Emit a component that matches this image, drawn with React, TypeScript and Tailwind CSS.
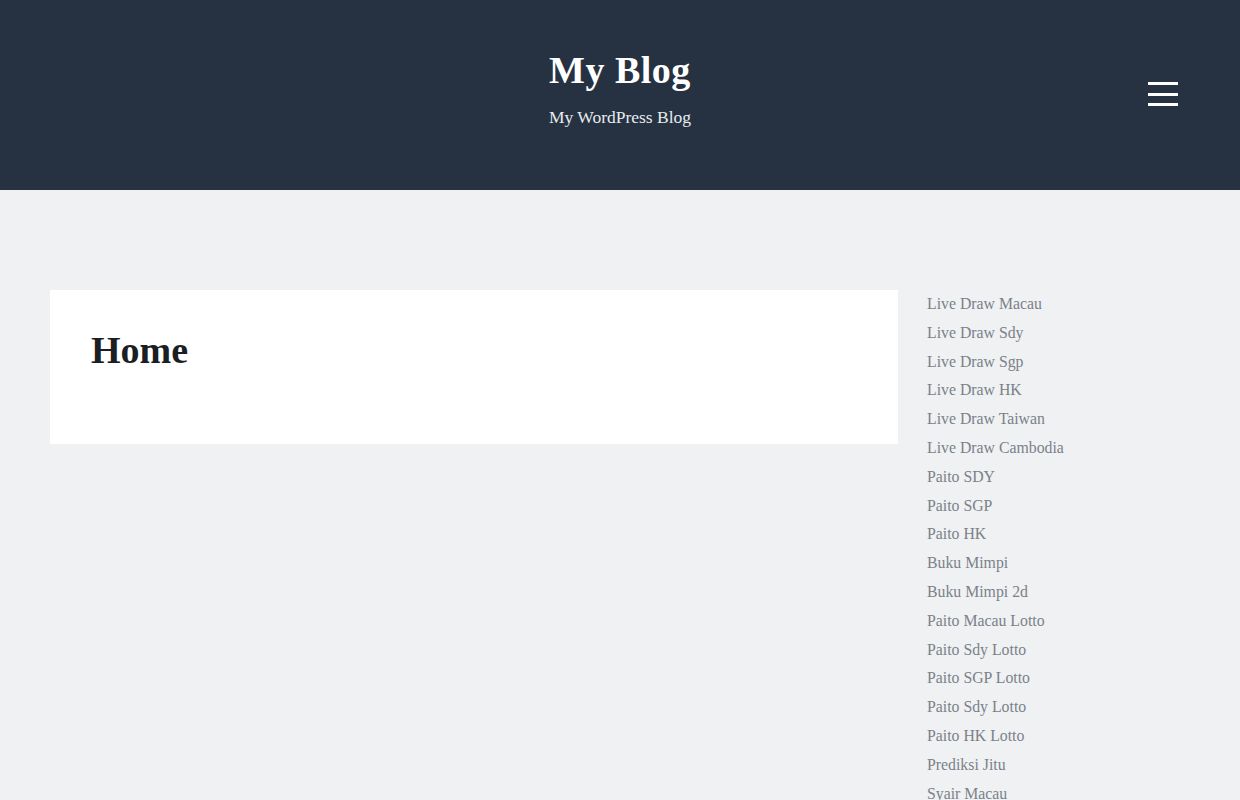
const links = [
  "Live Draw Macau",
  "Live Draw Sdy",
  "Live Draw Sgp",
  "Live Draw HK",
  "Live Draw Taiwan",
  "Live Draw Cambodia",
  "Paito SDY",
  "Paito SGP",
  "Paito HK",
  "Buku Mimpi",
  "Buku Mimpi 2d",
  "Paito Macau Lotto",
  "Paito Sdy Lotto",
  "Paito SGP Lotto",
  "Paito Sdy Lotto",
  "Paito HK Lotto",
  "Prediksi Jitu",
  "Syair Macau",
];

export default function App() {
  return (
    <div className="min-h-screen bg-[#eff1f3] font-['Liberation_Serif','DejaVu_Serif',serif]">
      <header className="bg-[#263241] h-[190px] flex items-start justify-center relative">
        <div className="text-center pt-[48px]">
          <h1 className="text-white font-bold text-[38px] leading-[44px] tracking-[0.5px]">My Blog</h1>
          <p className="text-[#e8ecef] text-[17.5px] mt-[12px]">My WordPress Blog</p>
        </div>
        <button className="absolute right-[62px] top-[82px] w-[30px] flex flex-col gap-[7.5px]" aria-label="Menu">
          <span className="block h-[3px] bg-white" />
          <span className="block h-[3px] bg-white" />
          <span className="block h-[3px] bg-white" />
        </button>
      </header>
      <main className="flex gap-[29px] px-[50px] pt-[100px]">
        <article className="w-[848px] h-[154px] bg-white px-[41px] pt-[38px]">
          <h2 className="text-[#1b1f24] font-bold text-[38px] leading-[44px]">Home</h2>
        </article>
        <aside>
          <ul className="flex flex-col">
            {links.map((l, i) => (
              <li key={i} className="h-[28.8px] text-[15.8px] leading-[28.8px] text-[#7b8189]">
                {l}
              </li>
            ))}
          </ul>
        </aside>
      </main>
    </div>
  );
}
